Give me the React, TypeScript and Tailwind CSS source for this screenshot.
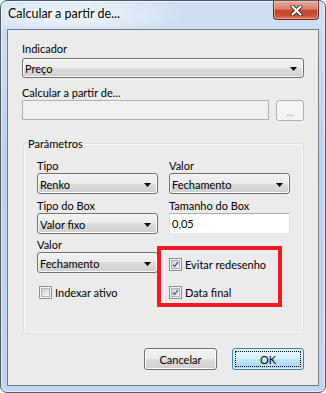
import React from "react";

const FONT = { fontFamily: 'Lato, "Noto Sans", sans-serif' };

function Arrow() {
  return (
    <svg width="7" height="4" viewBox="0 0 7 4" className="shrink-0">
      <polygon points="0,0 7,0 3.5,4" fill="#000" />
    </svg>
  );
}

function Combo({ text, h = 21 }: { text: string; h?: number }) {
  return (
    <div
      className={`flex items-center justify-between rounded-[3px] border border-[#707070] pl-[2px] pr-[6px] shadow-[inset_0_0_0_1px_#fbfbfb] bg-[linear-gradient(to_bottom,#f2f2f2_0%,#ebebeb_50%,#dddddd_50%,#cfcfcf_100%)] ${h === 20 ? "h-[20px]" : "h-[21px]"}`}
    >
      <span className="leading-[15px] pt-[1px]">{text}</span>
      <div className="pt-[2px]">
        <Arrow />
      </div>
    </div>
  );
}

function CheckBox({ checked }: { checked: boolean }) {
  return (
    <div className="w-[13px] h-[13px] border border-[#8e8f8f] bg-[#f4f4f4] p-[1px] shrink-0">
      <div className="w-full h-full border border-[#aeb3b9] bg-[linear-gradient(135deg,#cbcfd5,#f6f6f6)] flex items-center justify-center">
        {checked && (
          <svg width="9" height="9" viewBox="0 0 9 9">
            <path d="M1.2 4.6 L3.4 7 L7.8 1.2" fill="none" stroke="#4a5f97" strokeWidth="1.7" />
          </svg>
        )}
      </div>
    </div>
  );
}

function Label({ children }: { children: React.ReactNode }) {
  return <div className="h-[15px] leading-[15px] whitespace-nowrap">{children}</div>;
}

export default function App() {
  return (
    <div
      style={FONT}
      className="w-[326px] h-[393px] flex flex-col rounded-[7px] border border-[#4f5b68] shadow-[inset_0_0_0_1px_rgba(255,255,255,0.55)] bg-[linear-gradient(to_bottom,#cfe0f2_0%,#bcd3ec_40%,#c2d7ee_100%)] text-[11px] text-black overflow-hidden"
    >
      {/* Title bar */}
      <div className="h-[28px] flex justify-between items-start bg-[radial-gradient(ellipse_120px_22px_at_70px_14px,rgba(255,255,255,0.75),rgba(255,255,255,0))]">
        <div className="pl-[7px] pt-[5px] text-[12.5px] leading-[16px] [text-shadow:0_0_6px_#ffffff,0_0_3px_#ffffff]">
          Calcular a partir de...
        </div>
        <div className="mr-[6px] w-[46px] h-[19px] rounded-b-[4px] border border-t-0 border-[#6b281c] flex items-center justify-center bg-[linear-gradient(to_bottom,#e9a99a_0%,#d7826e_45%,#c44a30_50%,#c54c32_75%,#d9765a_100%)] shadow-[inset_0_0_0_1px_rgba(255,220,210,0.45)]">
          <svg width="13" height="11" viewBox="0 0 13 11">
            <path d="M2.5 1.5 L10.5 9.5 M10.5 1.5 L2.5 9.5" stroke="#3f2a27" strokeWidth="4" strokeLinecap="round" />
            <path d="M2.5 1.5 L10.5 9.5 M10.5 1.5 L2.5 9.5" stroke="#ffffff" strokeWidth="2.2" strokeLinecap="round" />
          </svg>
        </div>
      </div>

      {/* Client area */}
      <div className="mx-[6px] flex-1 border border-[#6f7c8a] bg-[#ebebeb] flex flex-col px-[14px] pt-[11px]">
        <Label>Indicador</Label>
        <div className="mt-[2px]">
          <Combo text="Preço" h={20} />
        </div>

        <div className="mt-[7px]">
          <Label>Calcular a partir de...</Label>
        </div>
        <div className="flex h-[20px]">
          <div className="w-[247px] h-[20px] border border-[#adb2b5] bg-[#f0f0f0]" />
          <div className="ml-[7px] w-[28px] h-[21px] rounded-[3px] border border-[#adb2b5] bg-[#f4f4f4] flex items-center justify-center text-[#8a8fa0] text-[10px] leading-[10px] pt-[3px]">
            ...
          </div>
        </div>

        {/* Group box */}
        <div className="relative mt-[23px] ml-[1px] h-[191px] rounded-[3px] border border-[#d5dfe5] shadow-[inset_0_0_0_1px_rgba(255,255,255,0.7)] pl-[13px] pt-[14px]">
          <div className="absolute left-[3px] top-[-8px] px-[1px] bg-[#ebebeb] leading-[15px]">Parâmetros</div>

          <div className="flex gap-[11px]">
            {/* Left column */}
            <div className="w-[121px] flex flex-col">
              <Label>Tipo</Label>
              <Combo text="Renko" />
              <div className="mt-[4px]">
                <Label>Tipo do Box</Label>
              </div>
              <Combo text="Valor fixo" />
              <div className="mt-[3px]">
                <Label>Valor</Label>
              </div>
              <Combo text="Fechamento" />
              <div className="mt-[12px] ml-[2px] h-[15px] flex items-center">
                <CheckBox checked={false} />
                <span className="ml-[3px] leading-[15px]">Indexar ativo</span>
              </div>
            </div>

            {/* Right column */}
            <div className="w-[121px] flex flex-col">
              <Label>Valor</Label>
              <Combo text="Fechamento" />
              <div className="mt-[4px]">
                <Label>Tamanho do Box</Label>
              </div>
              <div className="h-[21px] border border-[#abadb3] border-l-[#dbdfe6] border-r-[#dbdfe6] border-b-[#e3e9ef] bg-white pl-[2px] flex items-center leading-[15px]">
                0,05
              </div>
              <div className="mt-[23px] h-[15px] flex items-center">
                <CheckBox checked={true} />
                <span className="ml-[3px] leading-[15px]">Evitar redesenho</span>
              </div>
              <div className="mt-[13px] h-[15px] flex items-center">
                <CheckBox checked={true} />
                <span className="ml-[3px] leading-[15px]">Data final</span>
              </div>
            </div>
          </div>

          {/* Red annotation box */}
          <div className="absolute left-[133px] top-[102px] w-[125px] h-[61px] border-[4px] border-[#ed1c24]" />
        </div>

        {/* Buttons */}
        <div className="mt-[14px] flex justify-end gap-[15px]">
          <div className="w-[73px] h-[22px] rounded-[3px] border border-[#707070] shadow-[inset_0_0_0_1px_#fbfbfb] bg-[linear-gradient(to_bottom,#f2f2f2_0%,#ebebeb_50%,#dddddd_50%,#cfcfcf_100%)] flex items-center justify-center leading-[15px]">
            Cancelar
          </div>
          <div className="w-[72px] h-[22px] rounded-[3px] border border-[#3c7fb1] shadow-[inset_0_0_0_1px_#dff2fc] bg-[linear-gradient(to_bottom,#eaf6fd_0%,#d9f0fc_50%,#bee6fd_50%,#a7d9f5_100%)] p-[2px] flex">
            <div className="flex-1 border border-dotted border-black flex items-center justify-center leading-[15px]">
              OK
            </div>
          </div>
        </div>
      </div>
      <div className="h-[6px] shrink-0" />
    </div>
  );
}
